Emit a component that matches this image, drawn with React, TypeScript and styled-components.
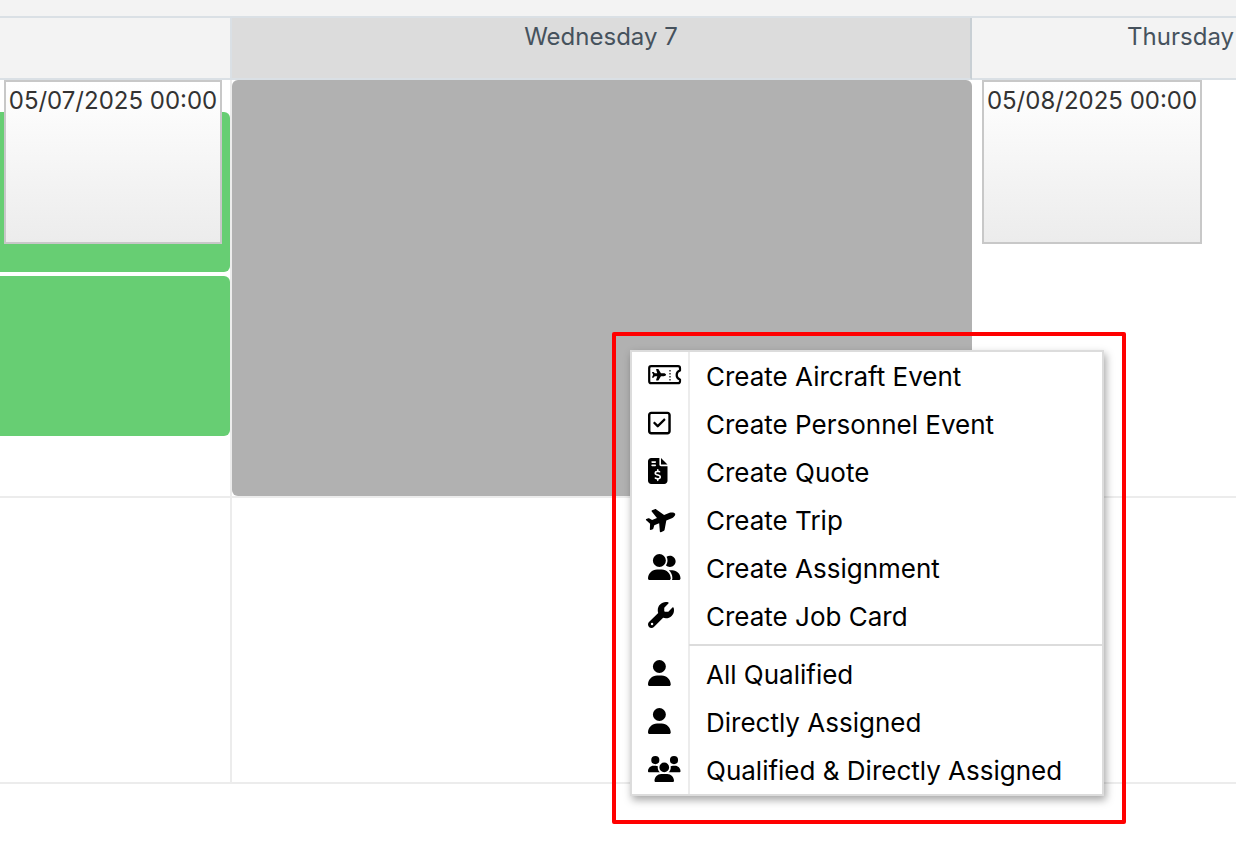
import React from "react";
import styled, { createGlobalStyle } from "styled-components";
import type { IconType } from "react-icons";
import {
  FaFileInvoiceDollar,
  FaRegSquareCheck,
  FaUser,
  FaUserGroup,
  FaUsers,
  FaWrench,
} from "react-icons/fa6";

const GlobalStyle = createGlobalStyle`
  * { box-sizing: border-box; }
  body {
    margin: 0;
    background: #ffffff;
    font-family: Inter, "Liberation Sans", sans-serif;
    overflow-x: hidden;
  }
`;

const Calendar = styled.main`
  position: relative;
  min-height: 100vh;
`;

const Toolbar = styled.div`
  height: 18px;
  background: #f3f3f3;
  border-bottom: 2px solid #dae0e5;
`;

const Days = styled.div`
  display: grid;
  grid-template-columns: 232fr 740fr 264fr;
`;

const DayHeader = styled.div<{ $active?: boolean; $align?: string }>`
  height: 62px;
  padding: 4px 2px 0;
  overflow: hidden;
  white-space: nowrap;
  text-align: ${(p) => p.$align ?? "center"};
  font-size: 24px;
  line-height: 30px;
  color: #46525d;
  background: ${(p) => (p.$active ? "#dcdcdc" : "#f3f3f3")};
  border-bottom: 2px solid #dae0e5;
  border-right: 2px solid ${(p) => (p.$active ? "#c8cfd4" : "#dae0e5")};

  &:last-child {
    border-right: 0;
  }
`;

const Cell = styled.div<{ $height: number; $divided?: boolean }>`
  position: relative;
  height: ${(p) => p.$height}px;
  border-bottom: 2px solid #ececec;
  border-right: ${(p) => (p.$divided ? "2px solid #ececec" : "0")};
`;

const BookedList = styled.div`
  display: flex;
  flex-direction: column;
  gap: 4px;
  padding-top: 32px;
`;

const Booked = styled.div`
  height: 160px;
  background: #67ce73;
  border-radius: 0 6px 6px 0;
`;

const Selection = styled.div`
  height: 100%;
  background: #b1b1b1;
  border-radius: 6px;
`;

const DateBubble = styled.time<{ $left: number; $width: number }>`
  position: absolute;
  top: 0;
  left: ${(p) => p.$left}px;
  width: ${(p) => p.$width}px;
  height: 164px;
  padding-top: 4px;
  border: 2px solid #c8c8c8;
  background: linear-gradient(#ffffff, #ececec);
  color: #333333;
  font-size: 24px;
  line-height: 30px;
  text-align: center;
  white-space: nowrap;
`;

const Highlight = styled.div`
  position: absolute;
  top: 332px;
  left: 612px;
  width: 514px;
  padding: 14px 18px 24px 14px;
  border: 4px solid #ff0000;
  border-radius: 2px;
`;

const Menu = styled.div`
  border: 2px solid #dcdcdc;
  background: linear-gradient(90deg, #ffffff 56px, #ececec 56px, #ececec 58px, #ffffff 58px);
  box-shadow: 2px 4px 8px rgba(0, 0, 0, 0.35);
`;

const MenuItem = styled.button`
  display: grid;
  grid-template-columns: 58px 1fr;
  align-items: center;
  width: 100%;
  height: 48px;
  padding: 0;
  border: 0;
  background: transparent;
  color: #000000;
  font-family: inherit;
  font-size: 26px;
  line-height: 32px;
  text-align: left;
  white-space: nowrap;
  cursor: pointer;
`;

const IconSlot = styled.span`
  display: flex;
  padding: 0 0 2px 16px;

  > svg {
    display: block;
    flex: none;
    width: 34px;
    height: 26px;
  }
`;

const Label = styled.span`
  padding: 2px 0 0 16px;
`;

const Separator = styled.hr`
  height: 2px;
  margin: 4px 0 4px 57px;
  border: 0;
  background: #dcdcdc;
`;

const planePath =
  "M482 193c34 0 94 29 94 64 0 36-60 64-94 64H366L266 496c-6 10-16 16-28 16h-56c-11 0-18-10-15-20l48-171H112l-43 58c-3 4-8 6-13 6H14c-8 0-14-6-14-14l46-114L0 143c0-8 6-14 14-14h42c5 0 10 2 13 6l43 58h103L167 20c-3-10 5-20 15-20h56c12 0 22 6 28 16l100 177z";

const AircraftTicketIcon = () => (
  <svg viewBox="0 0 34 26" fill="none" aria-hidden="true">
    <path
      d="M3.2 4.200H30q2 0 2 2v2.300a4.700 4.700 0 0 0 0 9v1.700q0 2-2 2H3.200q-2 0-2-2v-13q0-2 2-2z"
      stroke="currentColor"
      strokeWidth="2.2"
      strokeLinejoin="round"
    />
    <path d="M22 8v11" stroke="currentColor" strokeWidth="1.2" strokeDasharray="1.5 1.5" />
    <path transform="translate(4 7) scale(.0245 .0225)" fill="currentColor" d={planePath} />
  </svg>
);

const TripIcon = () => (
  <svg viewBox="0 0 34 26" overflow="visible" aria-hidden="true">
    <path
      transform="translate(13.500 13.200) rotate(-22) scale(.0510 .0460) translate(-288 -256)"
      fill="currentColor"
      d={planePath}
    />
  </svg>
);

const glyph = (Icon: IconType) => <Icon preserveAspectRatio="xMinYMid meet" aria-hidden="true" />;

type Action = { label: string; icon: React.ReactNode };

const createActions: Action[] = [
  { label: "Create Aircraft Event", icon: <AircraftTicketIcon /> },
  { label: "Create Personnel Event", icon: glyph(FaRegSquareCheck) },
  { label: "Create Quote", icon: glyph(FaFileInvoiceDollar) },
  { label: "Create Trip", icon: <TripIcon /> },
  { label: "Create Assignment", icon: glyph(FaUserGroup) },
  { label: "Create Job Card", icon: glyph(FaWrench) },
];

const filterActions: Action[] = [
  { label: "All Qualified", icon: glyph(FaUser) },
  { label: "Directly Assigned", icon: glyph(FaUser) },
  { label: "Qualified & Directly Assigned", icon: glyph(FaUsers) },
];

const Item = ({ label, icon }: Action) => (
  <MenuItem type="button" role="menuitem">
    <IconSlot>{icon}</IconSlot>
    <Label>{label}</Label>
  </MenuItem>
);

export default function App() {
  return (
    <>
      <GlobalStyle />
      <Calendar>
        <Toolbar />
        <Days>
          <DayHeader />
          <DayHeader $active>Wednesday 7</DayHeader>
          <DayHeader $align="right">Thursday</DayHeader>
        </Days>
        <Days>
          <Cell $height={418} $divided>
            <BookedList>
              <Booked />
              <Booked />
            </BookedList>
            <DateBubble $left={4} $width={218}>05/07/2025 00:00</DateBubble>
          </Cell>
          <Cell $height={418}>
            <Selection />
          </Cell>
          <Cell $height={418}>
            <DateBubble $left={10} $width={220}>05/08/2025 00:00</DateBubble>
          </Cell>
          <Cell $height={286} $divided />
          <Cell $height={286} $divided />
          <Cell $height={286} />
        </Days>
        <Highlight>
          <Menu role="menu">
            {createActions.map((a) => (
              <Item key={a.label} {...a} />
            ))}
            <Separator />
            {filterActions.map((a) => (
              <Item key={a.label} {...a} />
            ))}
          </Menu>
        </Highlight>
      </Calendar>
    </>
  );
}
